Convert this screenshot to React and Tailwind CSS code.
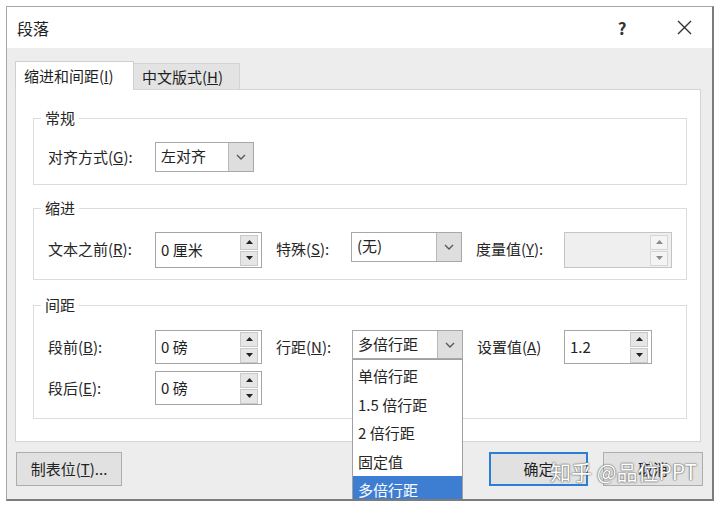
import React from 'react';

const font = { fontFamily: '"Noto Sans CJK SC", "Noto Sans", sans-serif' };

const Up = ({ color }) => (
  <svg width="7" height="4" viewBox="0 0 7 4"><polygon points="0,4 3.5,0 7,4" fill={color} /></svg>
);
const Down = ({ color }) => (
  <svg width="7" height="4" viewBox="0 0 7 4"><polygon points="0,0 7,0 3.5,4" fill={color} /></svg>
);

const SpinButtons = ({ disabled }) => (
  <div className="flex flex-col gap-[1px] mr-[3px]">
    <div className={`w-[18px] h-[15px] flex items-center justify-center border ${disabled ? 'border-[#d6d6d6] bg-[#f4f4f4]' : 'border-[#c9c9c9] bg-[#e6e6e6]'}`}>
      <Up color={disabled ? '#8a8a8a' : '#222'} />
    </div>
    <div className={`w-[18px] h-[15px] flex items-center justify-center border ${disabled ? 'border-[#d6d6d6] bg-[#f4f4f4]' : 'border-[#c9c9c9] bg-[#e6e6e6]'}`}>
      <Down color={disabled ? '#8a8a8a' : '#222'} />
    </div>
  </div>
);

const Chevron = () => (
  <svg width="10" height="6" viewBox="0 0 10 6">
    <polyline points="1,1 5,5 9,1" fill="none" stroke="#555" strokeWidth="1.3" />
  </svg>
);

const Select = ({ value, className, children }) => (
  <div className={`relative flex border border-[#a8a8a8] bg-white ${className}`}>
    <div className="flex-1 pl-[5px] text-[15px] leading-[26px] text-[#222]">{value}</div>
    <div className="w-[25px] bg-[#dedede] border-l border-[#b8b8b8] flex items-center justify-center">
      <Chevron />
    </div>
    {children}
  </div>
);

const Label = ({ children, className }) => (
  <div className={`text-[15px] text-[#262626] ${className}`}>{children}</div>
);

export default function App() {
  const lineOptions = ['单倍行距', '1.5 倍行距', '2 倍行距', '固定值', '多倍行距'];

  return (
    <div className="w-[720px] h-[507px] bg-white pt-[6px] pl-[6px]" style={font}>
      <div className="relative w-[708px] h-[495px] flex flex-col overflow-hidden bg-[#ededed] border-l border-t border-[#a6a6a6] border-r-2 border-b-2 border-r-[#7c7c7c] border-b-[#7c7c7c]">
        {/* title bar */}
        <div className="h-[41px] bg-white flex items-center pl-[10px] pr-[5px]">
          <div className="text-[16px] text-[#1f1f1f]">段落</div>
          <div className="ml-auto w-[30px] text-center text-[17px] font-bold text-[#333]">?</div>
          <div className="ml-[24px] w-[46px] flex justify-center">
            <svg width="15" height="15" viewBox="0 0 15 15">
              <path d="M1 1 L14 14 M14 1 L1 14" stroke="#333" strokeWidth="1.4" />
            </svg>
          </div>
        </div>

        <div className="pl-[8px] pt-[13px]">
          {/* tabs */}
          <div className="flex items-end h-[28px]">
            <div className="relative z-10 w-[119px] h-[29px] mb-[-1px] bg-white border border-b-0 border-[#cfcfcf] pl-[8px] text-[15px] leading-[28px] text-[#1f1f1f]">
              缩进和间距(<u>I</u>)
            </div>
            <div className="w-[106px] h-[26px] bg-[#e3e3e3] border border-l-0 border-b-0 border-[#d3d3d3] pl-[8px] text-[15px] leading-[26px] text-[#1f1f1f]">
              中文版式(<u>H</u>)
            </div>
          </div>

          {/* panel */}
          <div className="w-[686px] h-[353px] bg-white border border-[#d4d4d4] pl-[17px] pt-[18px]">
            <fieldset className="min-w-0 w-[654px] border border-[#dcdcdc] pl-[14px] pt-[14px] pb-[12px]">
              <legend className="-ml-[7px] px-[4px] text-[15px] leading-[20px] text-[#262626]">常规</legend>
              <div className="flex items-center h-[30px]">
                <Label className="w-[107px]">对齐方式(<u>G</u>):</Label>
                <Select value="左对齐" className="w-[99px] h-[30px]" />
              </div>
            </fieldset>

            <fieldset className="min-w-0 mt-[13px] w-[654px] border border-[#dcdcdc] pl-[14px] pt-[14px] pb-[11px]">
              <legend className="-ml-[7px] px-[4px] text-[15px] leading-[20px] text-[#262626]">缩进</legend>
              <div className="flex items-start">
                <Label className="w-[107px] leading-[34px]">文本之前(<u>R</u>):</Label>
                <div className="w-[107px] h-[36px] flex items-center border border-[#a5a5a5] bg-white">
                  <div className="flex-1 pl-[5px] text-[15px] text-[#222]">0 厘米</div>
                  <SpinButtons />
                </div>
                <Label className="ml-[14px] w-[75px] leading-[34px]">特殊(<u>S</u>):</Label>
                <Select value="(无)" className="w-[111px] h-[30px]" />
                <Label className="ml-[14px] w-[88px] leading-[34px] text-[#9a9a9a]">度量值(<u>Y</u>):</Label>
                <div className="w-[108px] h-[36px] flex items-center justify-end border border-[#c4c4c4] bg-[#efefef]">
                  <SpinButtons disabled />
                </div>
              </div>
            </fieldset>

            <fieldset className="min-w-0 mt-[15px] w-[654px] border border-[#dcdcdc] pl-[14px] pt-[15px] pb-[13px]">
              <legend className="-ml-[7px] px-[4px] text-[15px] leading-[20px] text-[#262626]">间距</legend>
              <div className="flex items-start">
                <Label className="w-[107px] leading-[34px]">段前(<u>B</u>):</Label>
                <div className="w-[107px] h-[34px] flex items-center border border-[#a5a5a5] bg-white">
                  <div className="flex-1 pl-[5px] text-[15px] text-[#222]">0 磅</div>
                  <SpinButtons />
                </div>
                <Label className="ml-[14px] w-[76px] leading-[34px]">行距(<u>N</u>):</Label>
                <Select value="多倍行距" className="w-[111px] h-[29px]">
                  <div className="absolute left-[-1px] top-[28px] w-[111px] h-[145px] bg-white border border-[#a0a0a0] pt-[2px]">
                    {lineOptions.map((o, i) => (
                      <div
                        key={o}
                        className={`h-[28.5px] pl-[5px] text-[15px] leading-[28.5px] ${i === 4 ? 'bg-[#3d7ed3] text-white' : 'text-[#262626]'}`}
                      >
                        {o}
                      </div>
                    ))}
                  </div>
                </Select>
                <Label className="ml-[14px] w-[87px] leading-[34px]">设置值(<u>A</u>)</Label>
                <div className="w-[88px] h-[34px] flex items-center border border-[#a5a5a5] bg-white">
                  <div className="flex-1 pl-[5px] text-[15px] text-[#222]">1.2</div>
                  <SpinButtons />
                </div>
              </div>
              <div className="flex items-start mt-[7px]">
                <Label className="w-[107px] leading-[34px]">段后(<u>E</u>):</Label>
                <div className="w-[107px] h-[34px] flex items-center border border-[#a5a5a5] bg-white">
                  <div className="flex-1 pl-[5px] text-[15px] text-[#222]">0 磅</div>
                  <SpinButtons />
                </div>
              </div>
            </fieldset>
          </div>

          {/* buttons */}
          <div className="flex items-center mt-[10px] w-[688px]">
            <div className="ml-[1px] w-[106px] h-[34px] bg-[#e1e1e1] border border-[#adadad] flex items-center justify-center text-[15px] text-[#222]">
              制表位(<u>T</u>)...
            </div>
            <div className="ml-auto w-[99px] h-[34px] bg-[#e1e1e1] border-2 border-[#2a7fd4] flex items-center justify-center text-[15px] text-[#222]">
              确定
            </div>
            <div className="ml-[15px] w-[100px] h-[34px] bg-[#e1e1e1] border border-[#adadad] flex items-center justify-center text-[15px] text-[#222]">
              取消
            </div>
          </div>
        </div>

        {/* watermark */}
        <div className="absolute left-[543px] top-[450px] text-[21px] text-white leading-[28px] whitespace-nowrap [text-shadow:0_0_1px_#444,0_0_2px_#666]">
          知乎 @品位PPT
        </div>
      </div>
    </div>
  );
}
